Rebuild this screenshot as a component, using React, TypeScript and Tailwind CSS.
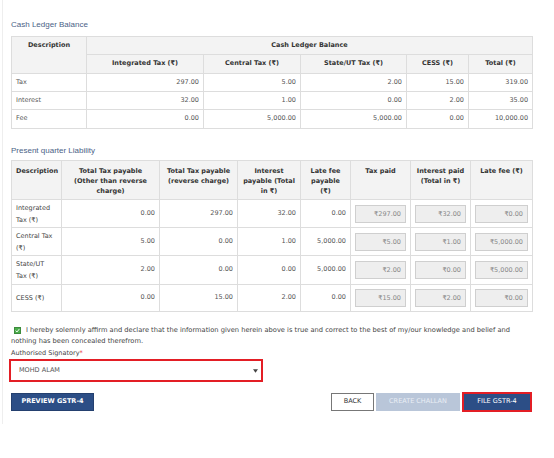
import React from "react"

const ledger = [
  ["Tax", "297.00", "5.00", "2.00", "15.00", "319.00"],
  ["Interest", "32.00", "1.00", "0.00", "2.00", "35.00"],
  ["Fee", "0.00", "5,000.00", "5,000.00", "0.00", "10,000.00"],
]

const liability = [
  { d: ["Integrated", "Tax (₹)"], v: ["0.00", "297.00", "32.00", "0.00"], p: ["₹297.00", "₹32.00", "₹0.00"], h: "h-[28px]" },
  { d: ["Central Tax", "(₹)"], v: ["5.00", "0.00", "1.00", "5,000.00"], p: ["₹5.00", "₹1.00", "₹5,000.00"], h: "h-[28px]" },
  { d: ["State/UT", "Tax (₹)"], v: ["2.00", "0.00", "0.00", "5,000.00"], p: ["₹2.00", "₹0.00", "₹5,000.00"], h: "h-[29px]" },
  { d: ["CESS (₹)"], v: ["0.00", "15.00", "2.00", "0.00"], p: ["₹15.00", "₹2.00", "₹0.00"], h: "h-[27px]" },
]

const th = "border border-[#dddddd] bg-[#f3f3f3] font-bold text-[#333] px-1 align-top"
const td = "border border-[#dddddd] px-1"
const cell1 = "h-[17px] flex items-center justify-center"
const cell2 = "h-[18px] flex items-center justify-center"

export default function App() {
  return (
    <div className="w-[554px] h-[458px] bg-white font-['DejaVu_Sans',sans-serif] text-[6.5px] text-[#444]">
      <div className="ml-[2px] w-[531px] border-l border-[#eeeeee] pl-[8px] pt-[20px] pb-[12px]">

        {/* CASH LEDGER */}
        <h2 className="font-['Liberation_Sans',Arial,sans-serif] text-[8px] leading-[10px] text-[#4a6286] mb-[6px]">
          Cash Ledger Balance
        </h2>

        <table className="w-[521px] table-fixed border-collapse">
          <colgroup>
            <col className="w-[75px]" />
            <col className="w-[117px]" />
            <col className="w-[97px]" />
            <col className="w-[106px]" />
            <col className="w-[62px]" />
            <col className="w-[64px]" />
          </colgroup>
          <thead>
            <tr>
              <th className={`${th} border-b-0 py-0`}><div className={cell1}>Description</div></th>
              <th colSpan={5} className={`${th} py-0`}><div className={cell1}>Cash Ledger Balance</div></th>
            </tr>
            <tr>
              <th className={`${th} border-t-0 py-0`}><div className={cell2}></div></th>
              <th className={`${th} py-0`}><div className={cell2}>Integrated Tax (₹)</div></th>
              <th className={`${th} py-0`}><div className={cell2}>Central Tax (₹)</div></th>
              <th className={`${th} py-0`}><div className={cell2}>State/UT Tax (₹)</div></th>
              <th className={`${th} py-0`}><div className={cell2}>CESS (₹)</div></th>
              <th className={`${th} py-0`}><div className={cell2}>Total (₹)</div></th>
            </tr>
          </thead>
          <tbody>
            {ledger.map((r, i) => (
              <tr key={i} className={i === 2 ? "h-[19px]" : "h-[18px]"}>
                {r.map((c, j) => (
                  <td key={j} className={`${td} ${j === 0 ? "text-left" : "text-right"} text-[#555]`}>{c}</td>
                ))}
              </tr>
            ))}
          </tbody>
        </table>

        {/* LIABILITY */}
        <h2 className="font-['Liberation_Sans',Arial,sans-serif] text-[8px] leading-[10px] text-[#4a6286] mt-[17px] mb-[4px]">
          Present quarter Liability
        </h2>

        <table className="w-[521px] table-fixed border-collapse">
          <colgroup>
            <col className="w-[50px]" />
            <col className="w-[98px]" />
            <col className="w-[78px]" />
            <col className="w-[63px]" />
            <col className="w-[50px]" />
            <col className="w-[60px]" />
            <col className="w-[60px]" />
            <col className="w-[62px]" />
          </colgroup>
          <thead>
            <tr className="h-[39px] leading-[10px]">
              <th className={`${th} text-left pt-[5px]`}>Description</th>
              <th className={`${th} text-center pt-[5px]`}>Total Tax payable<br />(Other than reverse<br />charge)</th>
              <th className={`${th} text-center pt-[5px]`}>Total Tax payable<br />(reverse charge)</th>
              <th className={`${th} text-center pt-[5px]`}>Interest<br />payable (Total<br />in ₹)</th>
              <th className={`${th} text-center pt-[5px]`}>Late fee<br />payable<br />(₹)</th>
              <th className={`${th} text-center pt-[5px]`}>Tax paid</th>
              <th className={`${th} text-center pt-[5px]`}>Interest paid<br />(Total in ₹)</th>
              <th className={`${th} text-center pt-[5px]`}>Late fee (₹)</th>
            </tr>
          </thead>
          <tbody>
            {liability.map((r, i) => (
              <tr key={i} className={r.h}>
                <td className={`${td} text-left leading-[12px] whitespace-nowrap`}>
                  {r.d.map((l, k) => (
                    <div key={k}>{l}</div>
                  ))}
                </td>
                {r.v.map((c, j) => (
                  <td key={j} className={`${td} text-right text-[#555]`}>{c}</td>
                ))}
                {r.p.map((c, j) => (
                  <td key={j} className={`${td}`}>
                    <div className="h-[18px] border border-[#cfcfcf] bg-[#eeeeee] text-right text-[#888] pr-[4px] leading-[16px]">
                      {c}
                    </div>
                  </td>
                ))}
              </tr>
            ))}
          </tbody>
        </table>

        {/* DECLARATION */}
        <p className="mt-[13px] leading-[11px] text-[6.7px] text-[#444]">
          <span className="inline-flex items-center justify-center w-[7px] h-[7px] bg-[#4cae4c] border border-[#3d8b3d] mr-[5px] ml-[3px] align-[-1px]">
            <svg viewBox="0 0 8 8" className="w-[5px] h-[5px]">
              <path d="M1 4.2 L3.2 6.4 L7 1.5" fill="none" stroke="white" strokeWidth="1.4" />
            </svg>
          </span>
          I hereby solemnly affirm and declare that the information given herein above is true and correct to the best of my/our knowledge and belief and nothing has been concealed therefrom.
        </p>

        <div className="mt-[1px] leading-[10px] text-[#444]">
          Authorised Signatory<span className="text-[#e31e25]">*</span>
        </div>

        <div className="mt-[1px] -ml-[2px] w-[254px] h-[23px] border-2 border-[#e31e25] bg-white flex items-center justify-between pl-[8px] pr-[3px]">
          <span className="text-[#555]">MOHD ALAM</span>
          <svg viewBox="0 0 6 4" className="w-[5px] h-[4px]">
            <path d="M0 0 L6 0 L3 4 Z" fill="#444" />
          </svg>
        </div>

        {/* BUTTONS */}
        <div className="mt-[10px] flex items-center justify-between w-[521px]">
          <button className="w-[83px] h-[18px] bg-[#2c4e86] text-white font-bold text-[6.5px] border border-[#24406f]">
            PREVIEW GSTR-4
          </button>
          <div className="flex items-center gap-[2px]">
            <button className="w-[43px] h-[18px] bg-white border border-[#777] text-[#333] text-[6.5px]">
              BACK
            </button>
            <button className="w-[84px] h-[18px] bg-[#b9c6d9] text-[#e9eef5] text-[6.5px]">
              CREATE CHALLAN
            </button>
            <div className="w-[70px] h-[20px] border-2 border-[#e31e25]">
              <button className="w-full h-full bg-[#2c4e86] text-white text-[6.5px]">
                FILE GSTR-4
              </button>
            </div>
          </div>
        </div>

      </div>
    </div>
  )
}
